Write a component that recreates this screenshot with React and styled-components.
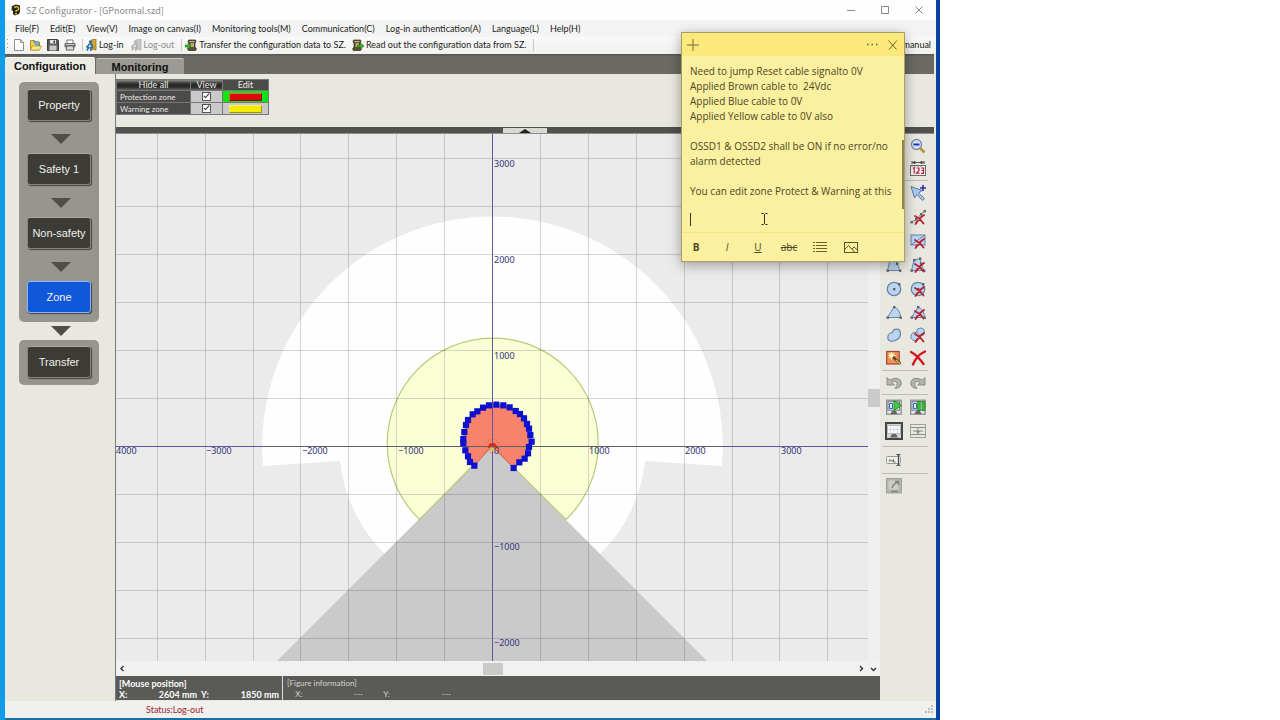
import React from "react";
import styled, { createGlobalStyle, css } from "styled-components";

const ui = `"Open Sans", "Noto Sans", sans-serif`;
const titleFont = `"Noto Sans CJK JP", "Open Sans", sans-serif`;
const narrow = `Lato, "Open Sans", sans-serif`;
const gothic = `"Liberation Sans", Arial, sans-serif`;

const Global = createGlobalStyle`
  *, *::before, *::after { box-sizing: border-box; }
  body { margin: 0; background: #fff; font-family: ${ui}; font-size: 10px; color: #222; }
  button { margin: 0; padding: 0; border: 0; background: none; font: inherit; color: inherit; cursor: default; }
  svg { display: block; }
`;

/* ---------- frame ---------- */
const Screen = styled.div`
  min-height: 100vh;
  display: flex;
  padding-right: 340px;
`;
const Desktop = styled.div`
  position: relative;
  flex: 1;
  display: flex;
  min-width: 0;
  padding: 0 4px 2px 5px;
  background: linear-gradient(90deg, #0d9bea 0 5px, #1a6fa5 5px calc(100% - 4px), #0b44a2 calc(100% - 4px));
`;
const AppWindow = styled.main`
  flex: 1;
  min-width: 0;
  display: flex;
  flex-direction: column;
  background: #e8e8e0;
`;
const TitleBar = styled.header`
  display: flex;
  align-items: center;
  height: 20px;
  padding-left: 6px;
  background: #fefefe;
`;
const Title = styled.h1`
  flex: 1;
  margin: 0 0 0 5px;
  font-family: ${titleFont};
  font-size: 9px;
  font-weight: 400;
  color: #8a8a8a;
`;
const WindowButton = styled.button`
  width: 34px;
  height: 20px;
  display: grid;
  place-items: center;
`;
const MenuBar = styled.nav`
  display: flex;
  align-items: center;
  gap: 11px;
  height: 17px;
  padding-left: 10px;
  background: #f4f4f4;
  font-family: ${narrow};
  font-size: 9px;
`;
const MenuItem = styled.button`
  line-height: 17px;
  white-space: nowrap;
`;
const ToolBar = styled.div`
  display: flex;
  align-items: center;
  height: 17px;
  padding: 0 5px 2px 2px;
  background: linear-gradient(#fafafa, #f0f0ee);
`;
const Grip = styled.span`
  width: 1px;
  height: 12px;
  margin-right: 5px;
  background: repeating-linear-gradient(#999 0 1px, transparent 1px 4px);
`;
const Divider = styled.span`
  width: 1px;
  height: 12px;
  margin: 0 3px 0 ${(p) => p.$before}px;
  background: #c8c8c8;
`;
const FileButton = styled.button`
  width: 17px;
  height: 12px;
`;
const TextTool = styled.button`
  display: flex;
  align-items: center;
  gap: 2px;
  margin-right: ${(p) => p.$after || 0}px;
  font-family: ${narrow};
  font-size: 9px;
  line-height: 14px;
  white-space: nowrap;
  color: ${(p) => (p.$off ? "#8d8d8d" : "#222")};
`;
const Spacer = styled.span`flex: 1;`;

/* ---------- tabs ---------- */
const TabStrip = styled.div`
  display: flex;
  align-items: flex-end;
  height: 20px;
  margin-right: 2px;
  background: linear-gradient(#55544f, #6b6a64 3px);
`;
const Tab = styled.button`
  height: ${(p) => (p.$active ? 17 : 16)}px;
  width: ${(p) => (p.$active ? 90 : 88)}px;
  margin-right: 1px;
  border-radius: 2px 2px 0 0;
  background: ${(p) => (p.$active ? "#ebebe4" : "#9b9a94")};
  border-top: 1px solid ${(p) => (p.$active ? "#fff" : "#c4c3be")};
  font-family: ${gothic};
  font-size: 11px;
  font-weight: 700;
  color: #111;
`;

/* ---------- body ---------- */
const Body = styled.div`
  flex: 1;
  display: flex;
  min-height: 0;
  padding-right: 2px;
`;
const Sidebar = styled.aside`
  width: 111px;
  padding: 8px 16px 0 14px;
  border-right: 1px solid #7a7a78;
`;
const StepPanel = styled.div`
  padding: ${(p) => (p.$last ? "6px 8px 7px" : "7px 8px 9px")};
  border-radius: 5px;
  background: #96958f;
`;
const Step = styled.button`
  display: block;
  width: 100%;
  height: 32px;
  border-radius: 3px;
  border: 1px solid ${(p) => (p.$active ? "#8db4f2" : "#85847e")};
  border-top-color: ${(p) => (p.$active ? "#8db4f2" : "#a9a8a2")};
  background: ${(p) => (p.$active ? "#1157da" : "#3c3b36")};
  box-shadow: 1px 1px 1px #45443f;
  font-family: ${gothic};
  font-size: 11px;
  color: #f0f0ec;
`;
const ArrowSlot = styled.div`
  display: grid;
  place-items: center;
  height: ${(p) => (p.$short ? 18 : 32)}px;
  padding: ${(p) => (p.$short ? 0 : 3)}px 0 0 3px;
`;
const Work = styled.div`
  flex: 1;
  min-width: 0;
  display: flex;
  flex-direction: column;
`;
const ZoneArea = styled.section`
  height: 53px;
  padding-top: 5px;
`;
const ZoneTable = styled.table`
  border-collapse: collapse;
  font-family: ${narrow};
  font-size: 9px;
  line-height: 10px;
  background: #4b4b49;
  color: #e8e8e4;
  td, th { padding: 0; border: 1px solid #777; font-weight: 400; height: 12px; }
  thead th { height: 11px; }
`;
const NameCell = styled.th`
  width: 74px;
  text-align: left;
  font-size: 8px;
  && { padding-left: 3px; }
  label { display: block; height: 10px; line-height: 10px; }
`;
const CheckCell = styled.td`
  width: 32px;
  background: #c9c9c9;
`;
const SwatchCell = styled.td`
  width: 46px;
  background: ${(p) => (p.$active ? "#0be60b" : "#c9c9c9")};
`;
const HeadButton = styled.button`
  display: block;
  width: 100%;
  height: 10px;
  line-height: 10px;
  background: linear-gradient(#8a8a88, #2a2a28 4px 7px, #666);
`;
const Check = styled.input`
  appearance: none;
  display: block;
  width: 9px;
  height: 9px;
  margin: 0 auto;
  border: 1px solid #555;
  background: #fff;
  &:checked::after {
    content: "";
    display: block;
    width: 3px;
    height: 6px;
    margin: -1px auto 0;
    border: solid #333;
    border-width: 0 1px 1px 0;
    transform: rotate(42deg);
  }
`;
const Swatch = styled.button`
  display: block;
  width: 33px;
  height: 8px;
  margin: 0 auto;
  background: ${(p) => p.$color};
  border: 1px solid rgba(255, 255, 255, 0.35);
  border-right-color: rgba(0, 0, 0, 0.35);
  border-bottom-color: rgba(0, 0, 0, 0.35);
`;
const FoldBar = styled.div`
  display: flex;
  justify-content: center;
  height: 7px;
  padding: 1px 0;
  background: #51514e;
  border-bottom: 1px solid #8e8e8c;
`;
const FoldButton = styled.button`
  width: 44px;
  height: 5px;
  background: #d9d9d4;
  display: grid;
  place-items: center;
`;
const Split = styled.div`
  flex: 1;
  min-height: 0;
  display: flex;
`;
const CanvasColumn = styled.div`
  flex: 1;
  min-width: 0;
  display: flex;
  flex-direction: column;
  background: #f1f1f1;
`;
const CanvasRow = styled.div`
  flex: 1;
  min-height: 0;
  display: flex;
`;
const Plot = styled.div`
  flex: 1;
  min-width: 0;
  height: 527px;
  background: #ebebeb;
  svg { width: 100%; height: 100%; }
  text { font-family: "Noto Sans", sans-serif; font-size: 9px; fill: #33337a; }
`;
const VScroll = styled.div`
  width: 12px;
  display: flex;
  align-items: center;
  background: #efefef;
`;
const HScroll = styled.div`
  display: flex;
  align-items: center;
  justify-content: space-between;
  height: 15px;
  padding: 0 2px 0 3px;
`;
const Thumb = styled.span`
  width: ${(p) => p.$w}px;
  height: ${(p) => p.$h}px;
  background: #cacaca;
`;
const ScrollEnd = styled.span`
  display: flex;
  gap: 6px;
  width: ${(p) => (p.$wide ? 20 : 8)}px;
`;
const InfoPanel = styled.section`
  display: flex;
  height: 25px;
  border-bottom: 1px solid #e8e8e0;
  background: #5a5a57;
  color: #fff;
  font-family: ${narrow};
  font-size: 9px;
  line-height: 11px;
`;
const InfoBlock = styled.div`
  padding: 2px 3px 0;
  ${(p) => p.$first ? css`width: 167px; border-right: 1px solid #ddd; font-weight: 700;`
    : css`flex: 1; padding-left: 4px; font-size: 8px; color: #d4d4d0;`}
`;
const Readout = styled.div`
  display: grid;
  grid-template-columns: ${(p) => p.$cols};
  white-space: nowrap;
  span:nth-child(even) { text-align: right; }
`;
const StatusBar = styled.footer`
  display: flex;
  align-items: center;
  justify-content: space-between;
  height: 17px;
  padding: 0 2px 0 141px;
  background: #f0f0ee;
  font-family: ${narrow};
  font-size: 9px;
  color: #a0202c;
`;

/* ---------- right tool palette ---------- */
const Palette = styled.aside`
  width: 54px;
  padding: 0 6px 0 2px;
`;
const ToolGroup = styled.div`
  display: grid;
  grid-template-columns: 24px 24px;
  grid-auto-rows: ${(p) => p.$row || 24}px;
  padding-bottom: ${(p) => p.$bottom || 0}px;
  border-top: ${(p) => (p.$line ? "1px solid #bdbdb5" : "0")};
`;
const ToolButton = styled.button`
  display: grid;
  place-items: center;
`;

/* ---------- sticky note ---------- */
const Note = styled.section`
  position: absolute;
  top: 32px;
  right: 35px;
  width: 224px;
  height: 230px;
  display: flex;
  flex-direction: column;
  background: #faf0a0;
  border: 1px solid #a89f62;
  box-shadow: 0 3px 12px rgba(0, 0, 0, 0.35);
  color: #4d4624;
`;
const NoteHead = styled.div`
  display: flex;
  align-items: center;
  gap: 9px;
  height: 23px;
  padding: 0 5px;
  background: #fbe97c;
`;
const NoteText = styled.textarea`
  flex: 1;
  display: block;
  width: 100%;
  margin: 0;
  padding: 8px 8px 0;
  border: 0;
  outline: 0;
  resize: none;
  overflow: hidden;
  background: transparent;
  font-family: ${ui};
  font-size: 10px;
  line-height: 15px;
  color: #4d4624;
`;
const NoteTools = styled.div`
  display: flex;
  align-items: center;
  height: 29px;
  border-top: 1px solid #f3e47e;
  button { width: 31px; height: 28px; padding-right: 3px; display: grid; place-items: center; }
`;
const Caret = styled.span`
  position: absolute;
  left: 8px;
  top: 180px;
  width: 1px;
  height: 13px;
  background: #333;
`;
const Pointer = styled.svg`
  position: absolute;
  left: 78px;
  top: 179px;
`;
const NoteScroll = styled.span`
  position: absolute;
  right: 0;
  top: 107px;
  width: 2px;
  height: 69px;
  background: #8d8556;
`;

/* ---------- small icons ---------- */
const Svg = ({ w = 16, h = w, box, children }) => (
  <svg width={w} height={h} viewBox={box || `0 0 ${w} ${h}`} fill="none" aria-hidden="true">{children}</svg>
);
const RedX = ({ x = 5, y = 6 }) => (
  <path d={`M${x} ${y + 1}q5 2.500 8.500 7.500M${x + 9} ${y}q-5 3-8.500 9`} stroke="#bb1f2e" strokeWidth="1.800" strokeLinecap="round" />
);
const Dots = ({ at }) => at.map(([x, y]) => (
  <rect key={`${x}-${y}`} x={x - 1} y={y - 1} width="2.4" height="2.4" fill="#5c6672" />
));
const blue = "#b9d5f1";
const edge = "#6b84a3";

const AppIcon = () => (
  <Svg w={10} h={12}>
    <path d="M1 2l4-1.500 4 1v6L8 10l-4 1.500L2 10V7L0.500 6z" fill="#25220f" />
    <path d="M3 3.500l3-1 1.500 1v2L5 7v1" stroke="#d9bd32" strokeWidth="1.400" />
    <rect x="4" y="9" width="2" height="1.500" fill="#d9bd32" />
  </Svg>
);
const NewIcon = () => (
  <Svg w={12} h={12}><path d="M1.500 0.500h6l3 3v8h-9z" fill="#fff" stroke="#8e8e8e" /><path d="M7.500 0.500v3h3" stroke="#8e8e8e" /></Svg>
);
const OpenIcon = () => (
  <Svg w={12} h={12}>
    <path d="M0.500 1.500h4l1 1.500h4v8h-9z" fill="#f0cf53" stroke="#b98d1c" />
    <path d="M3.500 2.500h4l2.500 4H6z" fill="#7db6dd" stroke="#3c7fa8" strokeWidth=".7" />
    <path d="M0.500 11l2-4h9l-2 4z" fill="#ffe78b" stroke="#c39a26" strokeWidth=".8" />
  </Svg>
);
const SaveIcon = () => (
  <Svg w={12} h={12}>
    <path d="M0.500 0.500h10l1 1v10h-11z" fill="#5b5b5b" stroke="#3d3d3d" />
    <rect x="3" y="1" width="6" height="3.500" fill="#e6e6e6" /><rect x="2.500" y="6.500" width="7" height="5" fill="#c9c9c9" />
    <rect x="6.500" y="1.500" width="1.500" height="2.500" fill="#444" />
  </Svg>
);
const PrintIcon = () => (
  <Svg w={12} h={12}>
    <path d="M3 4V1h6v3" fill="#fff" stroke="#777" /><rect x="0.500" y="4" width="11" height="4.500" rx="1" fill="#6d6d6d" />
    <path d="M3 7h6l1 4H2z" fill="#ddd" stroke="#666" /><path d="M2 5.500h8" stroke="#ccc" />
  </Svg>
);
const LogIcon = ({ off }) => (
  <Svg w={11} h={12}>
    <path d="M5 1l5-1v11l-5-1z" fill={off ? "#c9c9c9" : "#dba72c"} stroke={off ? "#aaa" : "#8a6413"} strokeWidth=".7" />
    <circle cx="4.500" cy="3" r="1.700" fill={off ? "#b3b3b3" : "#2e75a9"} />
    <path d="M3 5l3 0.500 0.500 3-2 0.500 0.500 3M3.500 5L1 8l1.500 0.500L1 11.500" stroke={off ? "#b3b3b3" : "#2e75a9"} strokeWidth="1.700" />
  </Svg>
);
const DeviceIcon = ({ out }) => (
  <Svg w={12} h={12}>
    <g transform={out ? "translate(-2 0)" : undefined}>
      <path d="M3.500 1h7l0.500 2-1 1v4l1.500 2-1 1.500h-7l-1-1.500L4 8V4L3 3z" fill="#5a4f30" stroke="#2f2a18" strokeWidth=".7" />
      <rect x="5.500" y="4" width="3.500" height="4" fill="#b9a871" /><path d="M4.500 2.500h5" stroke="#cfc28f" />
    </g>
    {out
      ? <path d="M5.500 6h3V4l3.500 3-3.500 3V8h-3z" fill="#3db22e" stroke="#1f7c16" strokeWidth=".6" />
      : <path d="M0 6h3V4l3 3-3 3V8H0z" fill="#3db22e" stroke="#1f7c16" strokeWidth=".6" />}
  </Svg>
);
const DownArrow = () => <Svg w={20} h={10}><path d="M0 0h20L10 10z" fill="#4e4d48" /></Svg>;

const ZoomOutIcon = () => (
  <Svg><path d="M10 10l4.500 4.500" stroke="#c58a3a" strokeWidth="2.500" /><circle cx="6.500" cy="6.500" r="5" fill="#d6e6fa" stroke="#7c8ea8" strokeWidth="1.400" /><path d="M3.500 6.500h6" stroke="#2335b5" strokeWidth="2" /></Svg>
);
const MeasureIcon = () => (
  <Svg>
    <path d="M2 1.500h12M2 0v3M14 0v3M3 1.500l2-1.300v2.600zM13 1.500L11 0.200v2.600z" stroke="#444" strokeWidth=".9" />
    <rect x="0.500" y="4.500" width="15" height="10" fill="#f6f0f0" stroke="#6a6a6a" />
    <path d="M3 7.500l1.200-1v6M6.500 7h2.500v2.500l-2.500 2.700h3M11 7h2.500v5.300H11M11.500 9.500h2" stroke="#b3263c" strokeWidth="1.200" />
    <path d="M2 4.500v1.500M5 4.500v1.500M8 4.500v1.500M11 4.500v1.500" stroke="#6a6a6a" strokeWidth=".7" />
  </Svg>
);
const AddPointIcon = () => (
  <Svg><path d="M1 1.500l11 4-3.500 2.500 6 5.500-2 2-5.500-6-2.500 3.500z" fill="#a9cbf0" stroke="#6179a0" /><path d="M13 0v6M10 3h6" stroke="#2a2fb0" strokeWidth="1.600" /></Svg>
);
const LineDelIcon = () => (
  <Svg><path d="M1 13l5-2 5-6 4-3" stroke="#777" /><Dots at={[[1.5, 13], [6, 10], [11, 5], [14.500, 2]]} /><RedX /></Svg>
);
const RectDelIcon = () => (
  <Svg><rect x="1" y="2" width="14" height="10" fill={blue} stroke={edge} /><path d="M1 12L15 2" stroke={edge} /><RedX /></Svg>
);
const PolyIcon = ({ del }) => (
  <Svg><path d="M4 3l6-1.500 1 5 3 7H1.500z" fill={blue} stroke={edge} /><Dots at={[[4, 3], [10, 1.500], [11, 6.500], [14, 13.500], [1.500, 13.500]]} />{del && <RedX />}</Svg>
);
const CircleIcon = ({ del }) => (
  <Svg><circle cx="8" cy="8" r="6.700" fill={blue} stroke={edge} strokeWidth="1.300" /><Dots at={[[8, 8], [13, 3]]} />{del && <RedX />}</Svg>
);
const FanIcon = ({ del }) => (
  <Svg><path d="M1.500 13.500L8 3q6 2 6.500 10.500z" fill={blue} stroke={edge} /><Dots at={[[1.500, 13.500], [8, 3], [14.500, 13.500]]} />{del && <RedX />}</Svg>
);
const BlobIcon = ({ del }) => (
  <Svg>
    {del
      ? <><circle cx="10.500" cy="5" r="4" fill={blue} stroke={edge} /><circle cx="5" cy="9.500" r="4.200" fill={blue} stroke={edge} /><RedX /></>
      : <path d="M6.500 5.500C7 1 14.500 0.500 14.500 6.500 14.500 12 9 14.500 5 14.200 0.500 14 0.500 6.500 6.500 5.500z" fill={blue} stroke={edge} strokeWidth="1.200" />}
  </Svg>
);
const TeachIcon = () => (
  <Svg><rect x="0.700" y="1.500" width="12.500" height="12.500" fill="#f08f5b" stroke="#a84330" strokeWidth="1.200" /><path d="M5.500 2v8M2 5.500h8M3 3l5 5M8 3L3 8" stroke="#ffe79c" strokeWidth="1.200" /><circle cx="5.500" cy="5.500" r="2" fill="#fff6c9" /><path d="M7 7l7.500 7" stroke="#5d4a26" strokeWidth="2.600" /><path d="M10 10l4 4" stroke="#e3bf4e" strokeWidth="1.200" /></Svg>
);
const DeleteIcon = () => (
  <Svg><path d="M1 2q6 3 12.500 12M15 1.500Q7 5 3 14.500" stroke="#d5131e" strokeWidth="2.400" strokeLinecap="round" /></Svg>
);
const UndoIcon = ({ flip }) => (
  <Svg><g transform={flip ? "translate(16 0) scale(-1 1)" : undefined}><path d="M1 2.500v7.500h7.500L5.800 7.500q4-2.500 5.400 0.500 0.600 2.500-2.200 5.500 6.500-0.500 6.300-6Q13.500 0.500 3.500 5z" fill="#b4b4ae" stroke="#868680" strokeWidth=".9" /></g></Svg>
);
const MonitorIcon = ({ pause }) => (
  <Svg>
    <rect x="0.700" y="1.200" width="14.500" height="14" fill="#e4e6e2" stroke="#84898a" strokeWidth="1.200" />
    <rect x="2" y="2.700" width="11.500" height="8.500" fill="#dfeaf5" stroke="#6d7c88" />
    <path d="M6 12h4l1.500 3h-7z" fill="#666" />
    <path d="M3.500 4.500h3v5h-3z" stroke="#3a66ad" />
    {pause ? <path d="M7.500 2.500h2.800v9H7.500zM12 2.500h2.800v9H12z" fill="#35c430" stroke="#1a7d1a" strokeWidth=".7" />
      : <path d="M8 1.500l7.500 5-7.500 5z" fill="#3fd03a" stroke="#1a7d1a" strokeWidth=".8" />}
  </Svg>
);
const GridMonitorIcon = () => (
  <Svg w={18} h={18}>
    <rect x="1" y="1" width="16" height="16" fill="#d4d4d0" stroke="#454545" strokeWidth="2" />
    <rect x="2.500" y="3.500" width="13" height="8" fill="#fafcff" stroke="#b4bcc4" />
    <path d="M5.500 4v7M9 4v7M12.500 4v7M3 7.500h12" stroke="#d3dde8" />
    <path d="M7 12h4l2 3.500H5z" fill="#666" />
  </Svg>
);
const FitIcon = () => (
  <Svg><rect x="0.500" y="1.500" width="15" height="13" stroke="#a2a29c" /><path d="M1 4.500h14M1 11.500h14M8 5v6M3 8h10M8 10.500l-1.500-2h3z" stroke="#8d8d87" /></Svg>
);
const RenameIcon = () => (
  <Svg><rect x="0.500" y="4.500" width="14" height="7" rx="1" fill="#efefeb" stroke="#9a9a94" /><path d="M3 9.500q0.500-3 2-1t2.500-1v2.500h2" stroke="#666" /><path d="M10.500 2.500h1l1 1 1-1h1M10.500 13.500h1l1-1 1 1h1M12.500 3v10" stroke="#444" strokeWidth="1.200" /></Svg>
);
const ExportIcon = () => (
  <Svg><rect x="0.500" y="0.500" width="15" height="14.500" fill="#b5b5af" stroke="#a1a19b" /><rect x="2.500" y="2.500" width="10" height="9" fill="#cfcfca" /><path d="M6 10q1-4 6-6M9 3.500h3.500V7M5 13.500h7" stroke="#82827c" strokeWidth="1.400" /></Svg>
);

/* ---------- plot ---------- */
const O = { x: 492, y: 446 };
const handles = [
  [103, 257], [90, 246], [84, 229], [76, 211], [70, 190], [70, 177], [73, 156], [78, 135], [84, 120], [98, 103],
  [112, 94], [129, 83], [147, 76], [169, 74], [190, 76], [209, 82], [227, 93], [240, 102], [252, 115], [261, 132],
  [267, 146], [271, 165], [275, 185], [267, 201], [264, 220], [254, 236], [238, 247], [221, 264],
].map(([x, y]) => [440 + x / 3, 380 + y / 3]);
const cols = [-7, -6, -5, -4, -3, -2, -1, 1, 2, 3, 4, 5, 6, 7];
const rows = [-6, -5, -4, -3, -2, -1, 1, 2, 3, 4];

const ScanPlot = () => (
  <svg viewBox="116 134 752 527" preserveAspectRatio="xMidYMid slice" role="img" aria-label="Zone canvas">
    <path d="M263 466A230.300 230.300 0 1 1 722 466L645 461A153 153 0 0 1 600 554L492 446 385 554A153 153 0 0 1 340 461z" fill="#fefefe" />
    <path d="M492 446L-8 946H992z" fill="#cacaca" />
    <path d="M492 446L419.500 519.500A105.500 105.500 0 1 1 566 519.500z" fill="#fbffd6" stroke="#b6cc78" strokeWidth="1.200" />
    <path d={`M492 446L${handles.map((p) => p.join(" ")).join("L")}z`} fill="#f8836c" stroke="#c0503c" strokeWidth=".8" />
    <g stroke="#404048" strokeOpacity=".22" shapeRendering="crispEdges">
      {cols.map((c) => <path key={c} d={`M${Math.round(O.x + c * 47.9) + 0.5} -200V1000`} />)}
      {rows.map((r) => <path key={r} d={`M-400 ${Math.round(O.y + r * 48) + 0.5}H1400`} />)}
    </g>
    <path d="M-400 446.500H1400M492.500 -200V1000" stroke="#5a5a9c" shapeRendering="crispEdges" />
    <path d="M263 446.500H722" stroke="#606068" shapeRendering="crispEdges" />
    <g fill="#0d10cf">
      {handles.map(([x, y]) => <rect key={`${x} ${y}`} x={x - 3.100} y={y - 3.100} width="6.200" height="6.200" />)}
    </g>
    <circle cx="492.500" cy="446" r="7" stroke="#d9503a" strokeWidth=".7" strokeDasharray="2 2" fill="none" />
    <path d="M488 448q0-5 4.500-5t5 5.500l-3-1-2-2-2 2z" fill="#c8321a" />
    <path d="M492.500 447l3 4h-6z" fill="#eeb739" />
    {[[-3, 206], [-2, 302], [-1, 398]].map(([n, x]) => <text key={n} x={x} y="454">{`−${-n * 1000}`}</text>)}
    {[["4000", 116], ["0", 494], ["1000", 589], ["2000", 685], ["3000", 781]].map(([t, x]) => <text key={t} x={x} y="454">{t}</text>)}
    {[["3000", 167], ["2000", 263], ["1000", 359], ["−1000", 550], ["−2000", 646]].map(([t, y]) => <text key={t} x="494" y={y}>{t}</text>)}
  </svg>
);

const noteText = `Need to jump Reset cable signalto 0V
Applied Brown cable to  24Vdc
Applied Blue cable to 0V
Applied Yellow cable to 0V also

OSSD1 & OSSD2 shall be ON if no error/no
alarm detected

You can edit zone Protect & Warning at this

`;

const menus = ["File(F)", "Edit(E)", "View(V)", "Image on canvas(I)", "Monitoring tools(M)", "Communication(C)",
  "Log-in authentication(A)", "Language(L)", "Help(H)"];
const steps = ["Property", "Safety 1", "Non-safety", "Zone"];
const toolGroups = [
  { row: 23, tools: [null, ["Zoom out", <ZoomOutIcon />], null, ["Measure", <MeasureIcon />]] },
  { line: true, tools: [null, ["Add point", <AddPointIcon />], null, ["Delete line", <LineDelIcon />], null,
    ["Delete rectangle", <RectDelIcon />], ["Polygon", <PolyIcon />], ["Delete polygon", <PolyIcon del />]] },
  { row: 23, bottom: 1, tools: [["Circle", <CircleIcon />], ["Delete circle", <CircleIcon del />], ["Fan", <FanIcon />],
    ["Delete fan", <FanIcon del />], ["Free shape", <BlobIcon />], ["Delete free shape", <BlobIcon del />],
    ["Teach", <TeachIcon />], ["Delete all", <DeleteIcon />]] },
  { line: true, row: 23, tools: [["Undo", <UndoIcon />], ["Redo", <UndoIcon flip />]] },
  { line: true, bottom: 3, tools: [["Start monitor", <MonitorIcon />], ["Pause monitor", <MonitorIcon pause />],
    ["Show grid", <GridMonitorIcon />], ["Fit", <FitIcon />]] },
  { line: true, row: 26, tools: [["Rename", <RenameIcon />]] },
  { line: true, tools: [["Export", <ExportIcon />]] },
];

export default function App() {
  return (
    <Screen>
      <Global />
      <Desktop>
        <AppWindow>
          <TitleBar>
            <AppIcon />
            <Title>SZ Configurator - [GPnormal.szd]</Title>
            <WindowButton aria-label="Minimize"><Svg w={8}><path d="M0 4.500h8" stroke="#888" /></Svg></WindowButton>
            <WindowButton aria-label="Maximize"><Svg w={8}><path d="M0.500 0.500h7v7h-7z" stroke="#888" /></Svg></WindowButton>
            <WindowButton aria-label="Close"><Svg w={8}><path d="M0.500 0.500l7 7M7.500 0.500l-7 7" stroke="#888" /></Svg></WindowButton>
          </TitleBar>
          <MenuBar>{menus.map((m) => <MenuItem key={m}>{m}</MenuItem>)}</MenuBar>
          <ToolBar>
            <Grip />
            <FileButton aria-label="New"><NewIcon /></FileButton>
            <FileButton aria-label="Open"><OpenIcon /></FileButton>
            <FileButton aria-label="Save"><SaveIcon /></FileButton>
            <FileButton aria-label="Print"><PrintIcon /></FileButton>
            <Divider $before={1} />
            <TextTool $after={7}><LogIcon />Log-in</TextTool>
            <TextTool $off><LogIcon off />Log-out</TextTool>
            <Divider $before={7} />
            <TextTool $after={6}><DeviceIcon />Transfer the configuration data to SZ.</TextTool>
            <TextTool><DeviceIcon out />Read out the configuration data from SZ.</TextTool>
            <Divider $before={7} />
            <Spacer />
            <TextTool>manual</TextTool>
          </ToolBar>
          <TabStrip role="tablist">
            <Tab role="tab" aria-selected="true" $active>Configuration</Tab>
            <Tab role="tab" aria-selected="false">Monitoring</Tab>
          </TabStrip>
          <Body>
            <Sidebar>
              <StepPanel>
                {steps.map((s, i) => (
                  <React.Fragment key={s}>
                    {i > 0 && <ArrowSlot><DownArrow /></ArrowSlot>}
                    <Step $active={s === "Zone"}>{s}</Step>
                  </React.Fragment>
                ))}
              </StepPanel>
              <ArrowSlot $short><DownArrow /></ArrowSlot>
              <StepPanel $last><Step>Transfer</Step></StepPanel>
            </Sidebar>
            <Work>
              <ZoneArea>
                <ZoneTable>
                  <thead>
                    <tr>
                      <th><HeadButton>Hide all</HeadButton></th>
                      <th><HeadButton>View</HeadButton></th>
                      <th>Edit</th>
                    </tr>
                  </thead>
                  <tbody>
                    <tr>
                      <NameCell scope="row"><label htmlFor="view-protection">Protection zone</label></NameCell>
                      <CheckCell><Check id="view-protection" type="checkbox" defaultChecked /></CheckCell>
                      <SwatchCell $active><Swatch aria-label="Edit protection zone" $color="#dd0a0a" /></SwatchCell>
                    </tr>
                    <tr>
                      <NameCell scope="row"><label htmlFor="view-warning">Warning zone</label></NameCell>
                      <CheckCell><Check id="view-warning" type="checkbox" defaultChecked /></CheckCell>
                      <SwatchCell><Swatch aria-label="Edit warning zone" $color="#f4ea08" /></SwatchCell>
                    </tr>
                  </tbody>
                </ZoneTable>
              </ZoneArea>
              <FoldBar>
                <FoldButton aria-label="Collapse"><Svg w={14} h={5}><path d="M1 5l6-4 6 4z" fill="#222" /></Svg></FoldButton>
              </FoldBar>
              <Split>
                <CanvasColumn>
                  <CanvasRow>
                    <Plot><ScanPlot /></Plot>
                    <VScroll><Thumb $w={12} $h={18} /></VScroll>
                  </CanvasRow>
                  <HScroll>
                    <ScrollEnd><Svg w={6} h={7}><path d="M4.500 1L2 3.500 4.500 6" stroke="#333" strokeWidth="1.400" /></Svg></ScrollEnd>
                    <Thumb $w={20} $h={12} />
                    <ScrollEnd $wide>
                      <Svg w={6} h={7}><path d="M2 1l2.500 2.500L2 6" stroke="#333" strokeWidth="1.400" /></Svg>
                      <Svg w={7} h={7}><path d="M1 3l2.500 2.500L6 3" stroke="#333" strokeWidth="1.400" /></Svg>
                    </ScrollEnd>
                  </HScroll>
                  <InfoPanel>
                    <InfoBlock $first>
                      <div>[Mouse position]</div>
                      <Readout $cols="24px 54px 24px 58px"><span>X:</span><span>2604 mm</span><span>&nbsp;&nbsp;Y:</span><span>1850 mm</span></Readout>
                    </InfoBlock>
                    <InfoBlock>
                      <div>[Figure information]</div>
                      <Readout $cols="36px 40px 54px 34px"><span>&nbsp;&nbsp;&nbsp;&nbsp;X:</span><span>---</span><span>&nbsp;&nbsp;&nbsp;&nbsp;&nbsp;&nbsp;&nbsp;&nbsp;&nbsp;&nbsp;Y:</span><span>---</span></Readout>
                    </InfoBlock>
                  </InfoPanel>
                </CanvasColumn>
                <Palette>
                  {toolGroups.map((g, i) => (
                    <ToolGroup key={i} $row={g.row} $bottom={g.bottom} $line={g.line}>
                      {g.tools.map((t, j) => t
                        ? <ToolButton key={j} aria-label={t[0]}>{t[1]}</ToolButton>
                        : <span key={j} />)}
                    </ToolGroup>
                  ))}
                </Palette>
              </Split>
            </Work>
          </Body>
          <StatusBar>
            <span>Status:Log-out</span>
            <Svg w={10} h={10}><path d="M7 1h2M4 4h2M7 4h2M1 7h2M4 7h2M7 7h2" stroke="#aaa" strokeWidth="1.500" /></Svg>
          </StatusBar>
        </AppWindow>
        <Note aria-label="Sticky note">
          <NoteHead>
            <button aria-label="New note"><Svg w={12}><path d="M6 0v12M0 6h12" stroke="#7b6f2c" /></Svg></button>
            <Spacer />
            <button aria-label="Menu"><Svg w={12} h={3}><path d="M1 1.500h1.500M5.500 1.500h1.500M10 1.500h1.500" stroke="#6c6228" strokeWidth="1.500" /></Svg></button>
            <button aria-label="Close note"><Svg w={12}><path d="M1.500 1.500l8 9M10 1.500l-8 9" stroke="#6c6228" /></Svg></button>
          </NoteHead>
          <NoteText aria-label="Note text" spellCheck={false} defaultValue={noteText} />
          <NoteTools>
            <button aria-label="Bold"><b>B</b></button>
            <button aria-label="Italic"><i>I</i></button>
            <button aria-label="Underline"><u>U</u></button>
            <button aria-label="Strikethrough"><s>abc</s></button>
            <button aria-label="Bullets"><Svg w={14} h={10}><path d="M0 0.500h2M0 3.500h2M0 6.500h2M0 9.500h2M3 0.500h11M3 3.500h11M3 6.500h11M3 9.500h11" stroke="#6c6228" /></Svg></button>
            <button aria-label="Image"><Svg w={14} h={11}><rect x="0.500" y="0.500" width="13" height="10" stroke="#5c5323" /><path d="M1 7l3.500-3.500 6 6.500M8 7l2-2 3.500 3" stroke="#5c5323" /></Svg></button>
          </NoteTools>
          <Caret />
          <Pointer width="9" height="14" viewBox="0 0 9 14" fill="none"><path d="M1.500 1.500h2l1 1 1-1h2M1.500 12.500h2l1-1 1 1h2M4.500 2v10" stroke="#333" /></Pointer>
          <NoteScroll />
        </Note>
      </Desktop>
    </Screen>
  );
}
